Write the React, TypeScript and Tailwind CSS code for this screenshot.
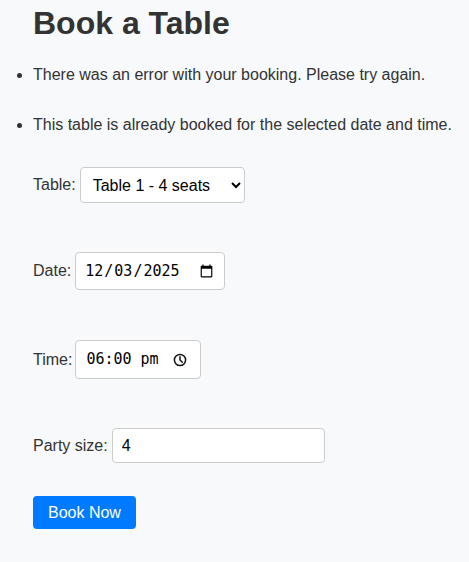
import { useState } from "react";

const errors = [
  "There was an error with your booking. Please try again.",
  "This table is already booked for the selected date and time.",
];

function ClockIcon() {
  return (
    <svg width="14" height="14" viewBox="0 0 14 14" fill="none" stroke="#111" strokeWidth="1.5" strokeLinecap="round">
      <circle cx="7" cy="7" r="5.6" />
      <path d="M7 3.8V7l2.3 2.3" />
    </svg>
  );
}

export default function App() {
  const [table, setTable] = useState("1");
  const [date, setDate] = useState("2025-12-03");
  const [party, setParty] = useState("4");

  return (
    <div className="min-h-screen bg-[#f8f9fa] font-['Liberation_Sans',Arial,sans-serif] text-base text-[#333] pt-[5px]">
      <h1 className="ml-[33px] text-[32px] font-bold leading-[37px] text-[#333]">Book a Table</h1>

      <ul className="mt-[24px] list-disc pl-[33px] flex flex-col gap-[32px]">
        {errors.map((e) => (
          <li key={e} className="leading-[18px]">
            {e}
          </li>
        ))}
      </ul>

      <form className="ml-[33px] mt-[33px] flex flex-col" onSubmit={(e) => e.preventDefault()}>
        <div className="flex items-center gap-[4px]">
          <label htmlFor="table">Table:</label>
          <select
            id="table"
            value={table}
            onChange={(e) => setTable(e.target.value)}
            className="h-[36px] w-[165px] rounded border border-[#ccc] bg-white pl-[8px] pr-[4px] text-base text-black"
          >
            <option value="1">Table 1 - 4 seats</option>
            <option value="2">Table 2 - 2 seats</option>
            <option value="3">Table 3 - 6 seats</option>
          </select>
        </div>

        <div className="mt-[49px] flex items-center gap-[4px]">
          <label htmlFor="date">Date:</label>
          <input
            id="date"
            type="date"
            value={date}
            onChange={(e) => setDate(e.target.value)}
            className="h-[38px] w-[150px] rounded border border-[#ccc] bg-white px-[8px] font-['DejaVu_Sans_Mono',monospace] text-[15px] text-black"
          />
        </div>

        <div className="mt-[50px] flex items-center gap-[3px]">
          <span>Time:</span>
          {/* native time field shows "PM" here, so it is drawn by hand */}
          <div className="flex h-[39px] w-[126px] items-center justify-between rounded border border-[#ccc] bg-white pl-[10px] pr-[13px] font-['DejaVu_Sans_Mono',monospace] text-[15px] text-black">
            <span className="whitespace-pre">06:00 pm</span>
            <ClockIcon />
          </div>
        </div>

        <div className="mt-[49px] flex items-center gap-[4px]">
          <label htmlFor="party">Party size:</label>
          <input
            id="party"
            type="number"
            min={1}
            value={party}
            onChange={(e) => setParty(e.target.value)}
            className="h-[35px] w-[213px] rounded border border-[#ccc] bg-white px-[9px] text-base text-black [appearance:textfield]"
          />
        </div>

        <div className="mt-[33px]">
          <button
            type="submit"
            className="h-[33px] rounded bg-[#007bff] px-[15px] text-base text-white"
          >
            Book Now
          </button>
        </div>
      </form>
    </div>
  );
}
